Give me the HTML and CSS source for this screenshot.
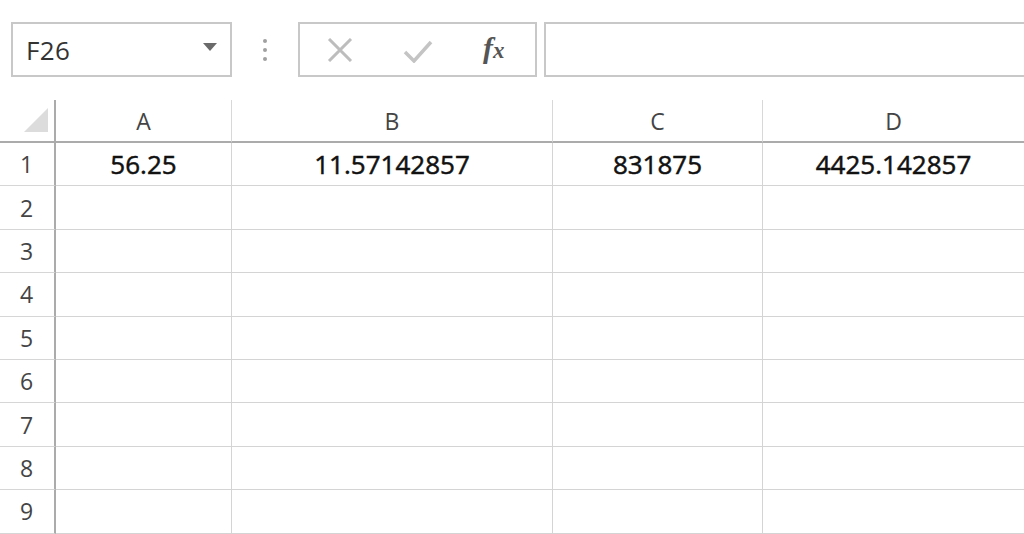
FILE: index.html
```html
<!DOCTYPE html>
<html>
<head>
<meta charset="utf-8">
<link rel="stylesheet" href="styles.css">
</head>
<body>
<div class="toolbar">
  <div class="namebox">
    <span class="name">F26</span>
    <svg class="caret" width="16" height="10" viewBox="0 0 16 10"><polygon points="1,1 15,1 8,9" fill="#6a6a6a"/></svg>
  </div>
  <div class="dots"><span></span><span></span><span></span></div>
  <div class="fbuttons">
    <svg class="ico-x" width="26" height="24" viewBox="0 0 26 24"><path d="M2 1 L24 23 M24 1 L2 23" stroke="#bdbdbd" stroke-width="3" fill="none"/></svg>
    <svg class="ico-check" width="30" height="24" viewBox="0 0 30 24"><path d="M2 13 L11 22 L28 3" stroke="#c4c4c4" stroke-width="3.5" fill="none"/></svg>
    <span class="fx"><i>f</i><i class="x">x</i></span>
  </div>
  <div class="formula"></div>
</div>
<div class="sheet">
  <div class="corner"><span class="tri"></span></div>
  <div class="colhdr">A</div>
  <div class="colhdr">B</div>
  <div class="colhdr">C</div>
  <div class="colhdr last">D</div>

  <div class="rowhdr">1</div>
  <div class="cell">56.25</div>
  <div class="cell">11.57142857</div>
  <div class="cell">831875</div>
  <div class="cell last">4425.142857</div>

  <div class="rowhdr">2</div><div class="cell"></div><div class="cell"></div><div class="cell"></div><div class="cell last"></div>
  <div class="rowhdr">3</div><div class="cell"></div><div class="cell"></div><div class="cell"></div><div class="cell last"></div>
  <div class="rowhdr">4</div><div class="cell"></div><div class="cell"></div><div class="cell"></div><div class="cell last"></div>
  <div class="rowhdr">5</div><div class="cell"></div><div class="cell"></div><div class="cell"></div><div class="cell last"></div>
  <div class="rowhdr">6</div><div class="cell"></div><div class="cell"></div><div class="cell"></div><div class="cell last"></div>
  <div class="rowhdr">7</div><div class="cell"></div><div class="cell"></div><div class="cell"></div><div class="cell last"></div>
  <div class="rowhdr">8</div><div class="cell"></div><div class="cell"></div><div class="cell"></div><div class="cell last"></div>
  <div class="rowhdr">9</div><div class="cell"></div><div class="cell"></div><div class="cell"></div><div class="cell last"></div>
</div>
</body>
</html>
```
FILE: styles.css
```css
* { box-sizing: border-box; }
html, body {
  margin: 0;
  padding: 0;
  background: #fff;
  overflow: hidden;
  width: 1024px;
  height: 534px;
  font-family: "Open Sans", "Noto Sans", sans-serif;
}
.toolbar {
  display: flex;
  align-items: center;
  height: 100px;
  padding: 22px 0 23px 11px;
}
.namebox {
  width: 221px;
  height: 55px;
  border: 2px solid #c8c8c8;
  display: flex;
  align-items: center;
  justify-content: space-between;
  padding: 0 12px 0 13px;
}
.name {
  font-size: 26px;
  color: #333;
  letter-spacing: 0.3px;
}
.caret { margin-top: -6px; }
.dots {
  width: 66px;
  height: 55px;
  display: flex;
  flex-direction: column;
  align-items: center;
  justify-content: center;
  gap: 5px;
}
.dots span {
  width: 4px;
  height: 4px;
  border-radius: 50%;
  background: #a0a0a0;
}
.fbuttons {
  width: 239px;
  height: 55px;
  border: 2px solid #c8c8c8;
  display: flex;
  align-items: center;
  padding-left: 27px;
}
.ico-x { margin-right: 50px; }
.ico-check { margin-right: 50px; margin-top: 2px; }
.fx {
  font-family: "Liberation Serif", serif;
  font-size: 30px;
  color: #555;
  font-weight: bold;
  line-height: 1;
  margin-top: -4px;
}
.fx i.x { font-size: 23px; margin-left: 0; }
.formula {
  margin-left: 7px;
  flex: 1;
  height: 55px;
  border: 2px solid #c8c8c8;
  border-right: none;
}
.sheet {
  display: grid;
  grid-template-columns: 56px 176px 321px 210px 1fr;
  grid-template-rows: 43px repeat(9, 43.4px);
}
.corner {
  border-right: 2px solid #ababab;
  border-bottom: 2px solid #ababab;
  position: relative;
}
.tri {
  position: absolute;
  left: 24px;
  top: 8px;
  width: 0;
  height: 0;
  border-left: 24px solid transparent;
  border-bottom: 24px solid #dcdcdc;
}
.colhdr {
  border-bottom: 2px solid #ababab;
  border-right: 1px solid #d8d8d8;
  display: flex;
  align-items: center;
  justify-content: center;
  font-size: 23px;
  color: #444;
}
.rowhdr {
  border-right: 2px solid #ababab;
  border-bottom: 1px solid #d6d6d6;
  display: flex;
  align-items: center;
  justify-content: center;
  font-size: 23px;
  color: #444;
  padding-right: 1px;
}
.cell {
  border-right: 1px solid #d4d4d4;
  border-bottom: 1px solid #d4d4d4;
  display: flex;
  align-items: center;
  justify-content: center;
  font-size: 26px;
  color: #111;
  -webkit-text-stroke: 0.5px #111;
  padding-bottom: 1px;
}
.last { border-right: none; }
```
